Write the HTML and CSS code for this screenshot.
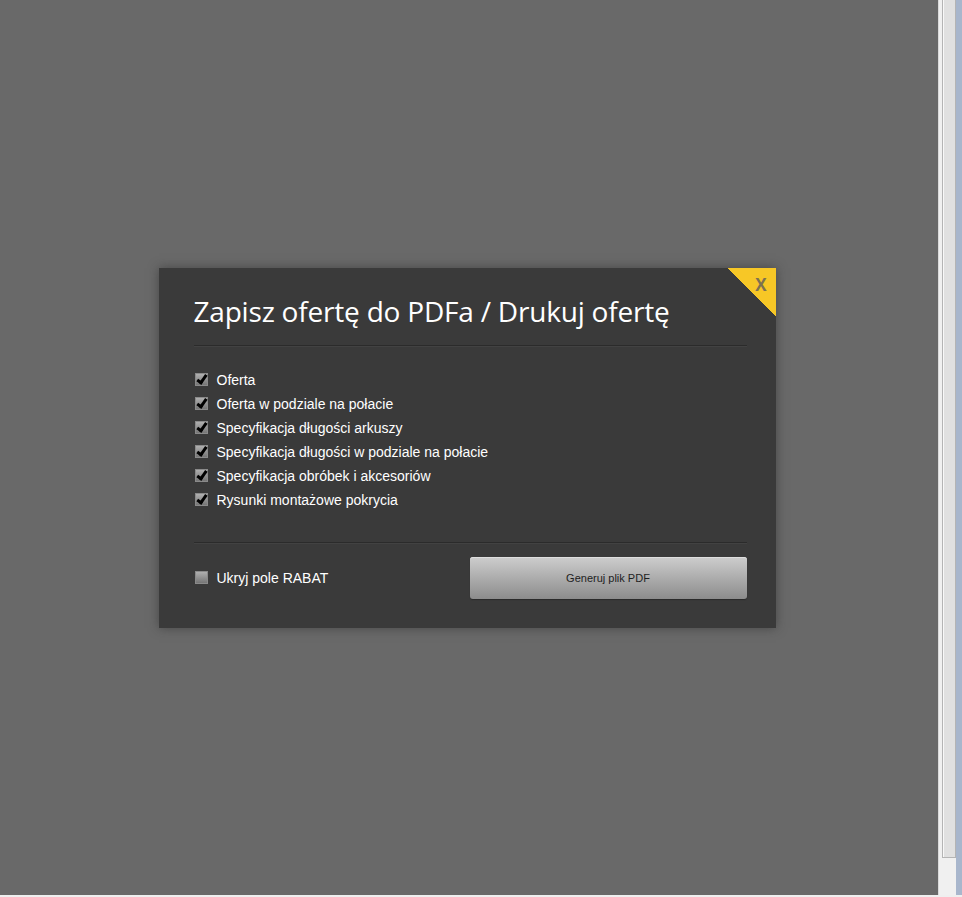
FILE: index.html
```html
<!DOCTYPE html>
<html lang="pl">
<head>
    <meta charset="UTF-8">
    <title>Zapisz ofertę do PDFa</title>
    <link rel="stylesheet" href="styles.css">
</head>
<body>
    <div class="window">
        <div class="overlay">
            <div class="dialog">
                <a class="close" href="#"><span>x</span></a>
                <h1 class="title">Zapisz ofertę do PDFa / Drukuj ofertę</h1>

                <ul class="options">
                    <li><span class="box checked"></span>Oferta</li>
                    <li><span class="box checked"></span>Oferta w podziale na połacie</li>
                    <li><span class="box checked"></span>Specyfikacja długości arkuszy</li>
                    <li><span class="box checked"></span>Specyfikacja długości w podziale na połacie</li>
                    <li><span class="box checked"></span>Specyfikacja obróbek i akcesoriów</li>
                    <li><span class="box checked"></span>Rysunki montażowe pokrycia</li>
                </ul>

                <div class="footer">
                    <label class="rabat"><span class="box"></span>Ukryj pole RABAT</label>
                    <button class="generate">Generuj plik PDF</button>
                </div>
            </div>
        </div>
        <div class="scrollbar"><div class="thumb"></div></div>
    </div>
    <div class="bottom-edge"></div>
</body>
</html>
```

FILE: styles.css
```css
html, body {
    margin: 0;
    padding: 0;
    height: 100%;
}

body {
    background: #f1f1f1;
    font-family: "Liberation Sans", Arial, sans-serif;
    overflow: hidden;
}

.window {
    display: flex;
    height: 895px;
}

/* Ciemne tlo pod okienkiem */
.overlay {
    flex: 1;
    background: #696969;
    display: flex;
    justify-content: center;
    align-items: center;
    padding-right: 4px;
}

.dialog {
    position: relative;
    width: 617px;
    height: 360px;
    box-sizing: border-box;
    padding: 0 29px 0 35px;
    background: #3a3a3a;
    box-shadow: 0 0 10px rgba(40, 40, 40, 0.55);
    overflow: hidden;
}

.close {
    position: absolute;
    top: 0;
    right: 0;
    width: 48px;
    height: 48px;
    background: linear-gradient(225deg, #f7c726 50%, transparent 50.5%);
    text-decoration: none;
}

.close span {
    position: absolute;
    top: 5px;
    right: 9px;
    font-family: "Open Sans", sans-serif;
    font-weight: bold;
    font-size: 17px;
    text-transform: uppercase;
    color: #7d7150;
}

.title {
    margin: 0;
    padding: 24px 0 15px;
    font-family: "Open Sans", sans-serif;
    font-weight: normal;
    font-size: 28px;
    color: #fff;
    letter-spacing: -0.2px;
    border-bottom: 1px solid #2b2b2b;
    box-shadow: 0 1px 0 #424242;
}

.options {
    list-style: none;
    margin: 0;
    padding: 22px 0 30px;
    border-bottom: 1px solid #2b2b2b;
    box-shadow: 0 1px 0 #424242;
}

.options li {
    display: flex;
    align-items: center;
    height: 24px;
    color: #fff;
    font-size: 14px;
}

.box {
    position: relative;
    width: 13px;
    height: 13px;
    margin: 0 9px 0 1px;
    background: linear-gradient(#b4b4b4, #707070);
    box-shadow: inset 0 0 0 1px #8a8a8a;
    flex-shrink: 0;
}

.box.checked::after {
    content: "";
    position: absolute;
    left: 4px;
    top: 0;
    width: 3px;
    height: 8px;
    border: solid #000;
    border-width: 0 3px 3px 0;
    transform: rotate(35deg);
}

.footer {
    display: flex;
    align-items: center;
    justify-content: space-between;
    padding-top: 14px;
}

.rabat {
    display: flex;
    align-items: center;
    color: #fff;
    font-size: 14px;
}

.rabat .box {
    margin-top: -1px;
}

.generate {
    width: 277px;
    height: 42px;
    border: none;
    border-radius: 3px;
    background: linear-gradient(#cdcdcd, #8c8c8c);
    box-shadow: inset 0 1px 0 #dedede, 0 1px 1px #2a2a2a;
    font-family: "Liberation Sans", Arial, sans-serif;
    font-size: 11px;
    color: #1e1e1e;
    cursor: pointer;
}

/* Pasek przewijania po prawej */
.scrollbar {
    width: 24px;
    box-sizing: border-box;
    background: #f0f0f0;
    border-left: 1px solid #dadada;
    padding: 0 6px 0 3px;
    box-shadow: inset -6px 0 0 #a8b6cc;
}

.thumb {
    height: 857px;
    background: #e0e0e0;
    border: 1px solid #b4b4b4;
    border-top: none;
    box-shadow: inset 1px 0 0 #f8f8f8;
}

.bottom-edge {
    height: 2px;
    background: #efefef;
}
```
